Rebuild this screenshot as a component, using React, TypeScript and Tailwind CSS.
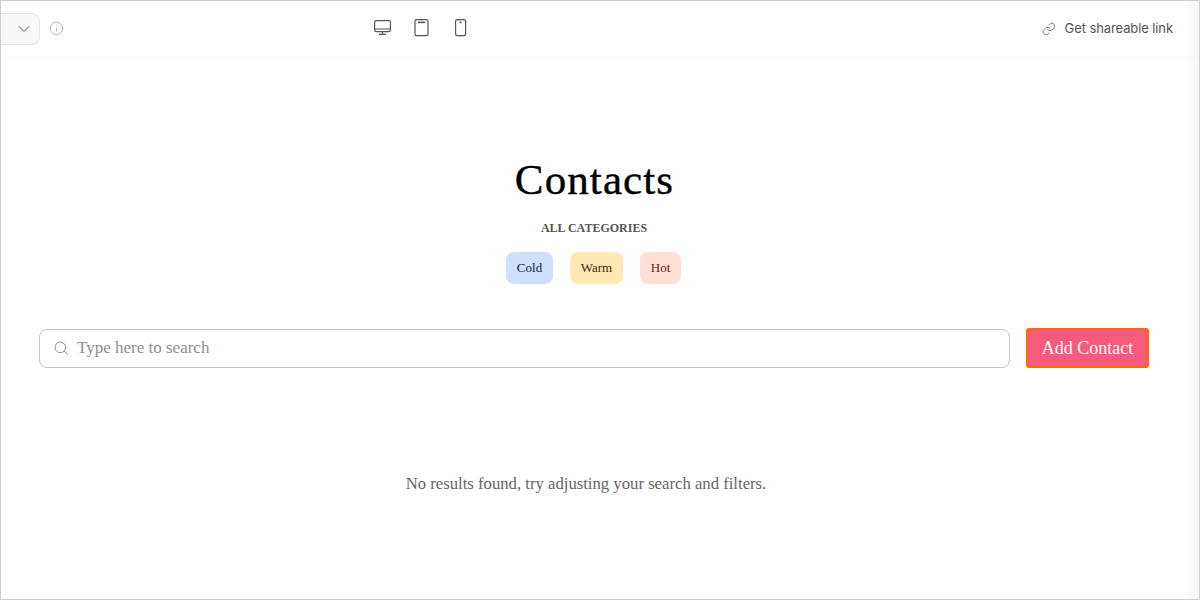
import React from 'react';
import { ChevronDown, Info, Link, Search } from 'lucide-react';

const CATEGORIES = [
  { name: 'Cold', className: 'bg-[#d0deff] text-[#14213d] w-[47px]' },
  { name: 'Warm', className: 'bg-[#ffe8b3] text-[#3d2a05] w-[53px]' },
  { name: 'Hot', className: 'bg-[#ffe0d6] text-[#6b1a10] w-[41px]' },
];

const App: React.FC = () => {
  return (
    <div className="relative h-[600px] w-[1200px] overflow-hidden border border-[#cfcfcf] bg-white font-['Liberation_Serif',serif]">
      {/* Top bar */}
      <div className="relative flex h-[55px] items-center justify-between bg-white font-['Inter',sans-serif] shadow-[0_1px_12px_rgba(0,0,0,0.02)]">
        <div className="flex items-center gap-[9px]">
          <div className="flex h-[32px] w-[39px] items-center justify-end rounded-r-[8px] border border-l-0 border-[#e6e6e6] bg-[#f8f8f8] pr-[5px] text-[#a3a3a3]">
            <ChevronDown size={20} strokeWidth={1.5} />
          </div>
          <Info size={15} strokeWidth={1.25} className="text-[#a8a8a8]" />
        </div>
        <div className="absolute left-[372px] top-[17px] flex items-center gap-[20px] text-[#555]">
          <svg width="19" height="19" viewBox="0 0 19 19" fill="none" stroke="currentColor" strokeWidth="1.2">
            <rect x="1.6" y="2.6" width="15.8" height="11" rx="1.6" />
            <path d="M1.6 11h15.8M9.5 13.6v2.6M6 16.4h7" />
          </svg>
          <svg width="19" height="19" viewBox="0 0 19 19" fill="none" stroke="currentColor" strokeWidth="1.2">
            <rect x="3" y="1.6" width="13" height="16" rx="1.6" />
            <path d="M6 4.4h7" strokeWidth="1.6" />
          </svg>
          <svg width="19" height="19" viewBox="0 0 19 19" fill="none" stroke="currentColor" strokeWidth="1.2">
            <rect x="4.6" y="1.6" width="10" height="16" rx="1.6" />
            <path d="M8.6 4.4h2" strokeWidth="1.6" />
          </svg>
        </div>
        <div className="flex items-center gap-[9px] pr-[26px] text-[13px] tracking-[-0.1px] text-[#555]">
          <Link size={14} strokeWidth={1.25} />
          <span>Get shareable link</span>
        </div>
      </div>

      {/* Page */}
      <div className="flex flex-col items-center pt-[98px]">
        <div className="flex w-full flex-col items-center pr-[12px]">
          <h1 className="pl-[1px] text-[43px] leading-[52px] tracking-[1.1px] text-black [-webkit-text-stroke:0.4px_black]">Contacts</h1>
          <p className="mt-[14px] text-[12px] leading-[16px] font-semibold text-[#555]">ALL CATEGORIES</p>
          <div className="mt-[16px] flex gap-[17px] pr-[1px]">
            {CATEGORIES.map((c) => (
              <span key={c.name} className={`flex h-[32px] items-center justify-center rounded-[8px] text-[13px] ${c.className}`}>
                {c.name}
              </span>
            ))}
          </div>
        </div>

        <div className="mt-[44px] flex w-full items-center gap-[16px] pl-[38px] pr-[50px]">
          <div className="flex h-[39px] flex-1 items-center gap-[8px] rounded-[8px] border border-[#c4c4c4] pl-[13px]">
            <Search size={16} strokeWidth={1.25} className="text-[#777]" />
            <span className="text-[17px] text-[#8f8f8f]">Type here to search</span>
          </div>
          <button className="h-[40px] w-[123px] rounded-[3px] border-2 border-[#ff6a00] bg-[#f65b7e] text-[18px] text-white">
            Add Contact
          </button>
        </div>

        <p className="mt-[103px] w-full pr-[28px] text-center text-[16.7px] text-[#666]">
          No results found, try adjusting your search and filters.
        </p>
      </div>

      {/* Faint shade along the right edge */}
      <div className="pointer-events-none absolute inset-y-0 right-0 w-[14px] bg-gradient-to-r from-transparent to-black/[0.04]" />
    </div>
  );
};

export default App;
